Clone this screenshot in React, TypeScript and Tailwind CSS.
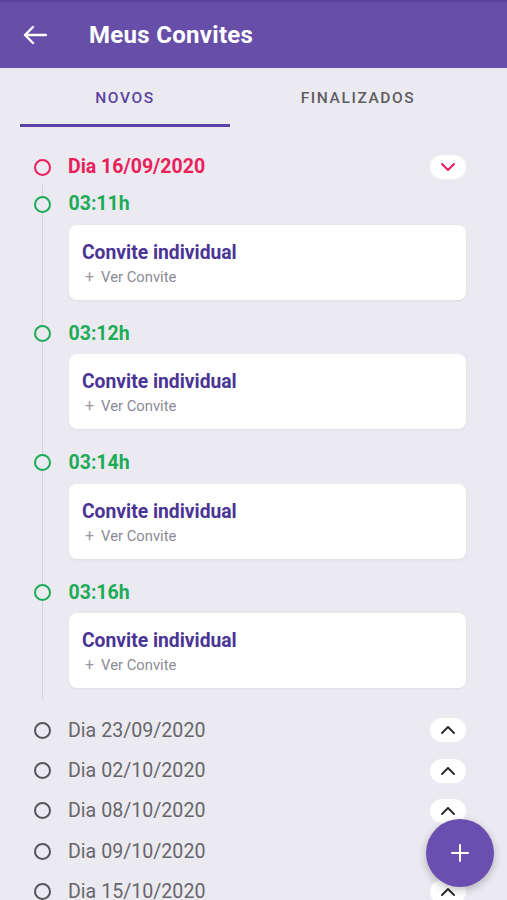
import React from 'react';

const times = ['03:11h', '03:12h', '03:14h', '03:16h'];
const otherDays = ['Dia 23/09/2020', 'Dia 02/10/2020', 'Dia 08/10/2020', 'Dia 09/10/2020', 'Dia 15/10/2020'];

function Chevron({ up = false, color }: { up?: boolean; color: string }) {
  return (
    <svg width="16" height="10" viewBox="0 0 16 10" fill="none">
      <polyline
        points={up ? '2,8 8,2 14,8' : '2,2 8,8 14,2'}
        stroke={color}
        strokeWidth="2"
        strokeLinecap="round"
        strokeLinejoin="round"
      />
    </svg>
  );
}

function Dot({ color }: { color: string }) {
  return (
    <span
      className="block h-[17px] w-[17px] shrink-0 rounded-full border-2 bg-[#ebeaf0]"
      style={{ borderColor: color }}
    />
  );
}

function ToggleButton({ up, color }: { up?: boolean; color: string }) {
  return (
    <button
      type="button"
      className="flex h-[24px] w-[36px] items-center justify-center rounded-[12px] bg-white"
    >
      <Chevron up={up} color={color} />
    </button>
  );
}

export default function App() {
  return (
    <div
      className="relative h-[900px] w-full overflow-hidden bg-[#ebeaf0]"
      style={{ fontFamily: 'Roboto, "Liberation Sans", sans-serif' }}
    >
      {/* header */}
      <header className="flex h-[68px] items-center border-t-2 border-[#5a429a] bg-[#674fa9] text-white">
        <button type="button" className="ml-[23px] flex h-8 w-8 items-center">
          <svg width="24" height="20" viewBox="0 0 24 20" fill="none">
            <path d="M23 10H2M10 2L2 10L10 18" stroke="white" strokeWidth="2.4" strokeLinecap="round" strokeLinejoin="round" />
          </svg>
        </button>
        <h1 className="ml-[34px] text-[24px] font-bold tracking-[0.3px]">Meus Convites</h1>
      </header>

      {/* tabs */}
      <nav className="flex h-[60px] gap-[23px] px-[20px]">
        <div className="flex w-[210px] flex-col">
          <span className="flex flex-1 items-center justify-center pt-[6px] text-[15.5px] font-medium tracking-[1.6px] text-[#5a43a0]">
            NOVOS
          </span>
          <span className="mb-[1px] h-[3px] bg-[#5b43a3]" />
        </div>
        <div className="flex w-[210px] flex-col">
          <span className="flex flex-1 items-center justify-center pt-[1px] text-[15.5px] font-medium tracking-[1.6px] text-[#5d5d62]">
            FINALIZADOS
          </span>
        </div>
      </nav>

      {/* timeline */}
      <main className="pr-[41px] pt-[23px]">
        <div className="flex h-8 items-center pl-[34px]">
          <Dot color="#e91e5b" />
          <span className="ml-[17px] flex-1 text-[19.5px] font-bold text-[#e91e5b]">Dia 16/09/2020</span>
          <ToggleButton color="#e91e5b" />
        </div>

        <div className="ml-[42px] border-l border-[#d5d4dc] pb-[11px] pt-[5px]">
          {times.map((t, i) => (
            <div key={t} className={i === 0 ? '' : 'mt-[17.4px]'}>
              <div className="-ml-[9.5px] flex h-8 items-center">
                <Dot color="#1cac58" />
                <span className="ml-[18px] text-[19.5px] font-bold text-[#1cac58]">{t}</span>
              </div>
              <div className="ml-[26px] mt-[5px] flex h-[75px] flex-col justify-center rounded-[8px] bg-white pl-[13px] pt-[2px] shadow-[0_1px_3px_rgba(0,0,0,0.06)]">
                <span className="text-[19.3px] font-bold leading-[24px] text-[#4a3595]">Convite individual</span>
                <span className="mt-[3px] flex items-center text-[14.8px] leading-[18px] text-[#8b8a96]">
                  <span className="ml-[3px] mr-[7px] text-[16px] text-[#9a99a3]">+</span>Ver Convite
                </span>
              </div>
            </div>
          ))}
        </div>

        <div className="pt-[11px]">
          {otherDays.map((d) => (
            <div key={d} className="flex h-[40.3px] items-center pl-[34px]">
              <Dot color="#55555b" />
              <span className="ml-[17px] flex-1 text-[19.6px] text-[#66666c]">{d}</span>
              <ToggleButton up color="#2e2e33" />
            </div>
          ))}
        </div>
      </main>

      {/* floating action button */}
      <button
        type="button"
        className="absolute left-[426px] top-[819px] flex h-[68px] w-[68px] items-center justify-center rounded-full bg-[#6a4fb0] shadow-[0_3px_8px_rgba(0,0,0,0.25)]"
      >
        <svg width="20" height="20" viewBox="0 0 20 20" fill="none">
          <path d="M10 2V18M2 10H18" stroke="white" strokeWidth="2" strokeLinecap="round" />
        </svg>
      </button>
    </div>
  );
}
